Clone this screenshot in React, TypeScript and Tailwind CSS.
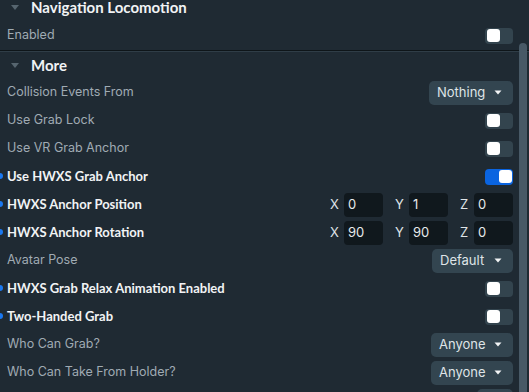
import React from 'react';

type Row =
  | { label: string; bold?: boolean; kind: 'toggle'; on?: boolean }
  | { label: string; bold?: boolean; kind: 'select'; value: string; w: string }
  | { label: string; bold?: boolean; kind: 'vec'; values: [string, string, string] }
  | { label: string; bold?: boolean; kind: 'num'; value: string };

const ROWS: Row[] = [
  { label: 'Collision Events From', kind: 'select', value: 'Nothing', w: 'w-[84px]' },
  { label: 'Use Grab Lock', kind: 'toggle' },
  { label: 'Use VR Grab Anchor', kind: 'toggle' },
  { label: 'Use HWXS Grab Anchor', bold: true, kind: 'toggle', on: true },
  { label: 'HWXS Anchor Position', bold: true, kind: 'vec', values: ['0', '1', '0'] },
  { label: 'HWXS Anchor Rotation', bold: true, kind: 'vec', values: ['90', '90', '0'] },
  { label: 'Avatar Pose', kind: 'select', value: 'Default', w: 'w-[81px]' },
  { label: 'HWXS Grab Relax Animation Enabled', bold: true, kind: 'toggle' },
  { label: 'Two-Handed Grab', bold: true, kind: 'toggle' },
  { label: 'Who Can Grab?', kind: 'select', value: 'Anyone', w: 'w-[82px]' },
  { label: 'Who Can Take From Holder?', kind: 'select', value: 'Anyone', w: 'w-[82px]' },
  { label: 'Grab Distance', kind: 'num', value: '1' },
];

const BOLD = { fontFamily: 'Lato, Inter, sans-serif' };

const Caret = () => (
  <svg width="8" height="5" viewBox="0 0 8 5" className="shrink-0">
    <path d="M0.5 0.5h7L4 4.5z" fill="#f2f4f5" />
  </svg>
);

const Toggle = ({ on }: { on?: boolean }) => (
  <div
    className={`w-[28px] h-[16px] rounded-[4px] p-[1.5px] flex ${on ? 'bg-[#0a64e0] justify-end' : 'bg-[#33444e] justify-start'}`}
  >
    <div className="w-[13px] h-[13px] rounded-[3px] bg-white" />
  </div>
);

const Select = ({ value, w }: { value: string; w: string }) => (
  <div className={`${w} h-[24px] rounded-[5px] bg-[#334550] flex items-center justify-between pl-[8px] pr-[11px] text-[13px] text-[#dfe4e7]`}>
    <span>{value}</span>
    <Caret />
  </div>
);

const Vec = ({ values }: { values: [string, string, string] }) => (
  <div className="flex items-center gap-[12px]">
    {(['X', 'Y', 'Z'] as const).map((axis, i) => (
      <div key={axis} className="flex items-center gap-[5px]">
        <span className="w-[9px] text-[13px] text-[#dfe4e7]">{axis}</span>
        <div className="w-[39px] h-[24px] rounded-[4px] bg-[#10181d] flex items-center pl-[4px] text-[13px] text-[#e6eaec]">
          {values[i]}
        </div>
      </div>
    ))}
  </div>
);

const Header = ({ title, className = '' }: { title: string; className?: string }) => (
  <div className={`shrink-0 flex items-center ${className}`}>
    <svg width="8" height="5" viewBox="0 0 8 5" className="ml-[11px] mr-[12px]">
      <path d="M0 0h8L4 5z" fill="#56656f" />
    </svg>
    <span className="text-[15px] font-bold text-[#f1f3f5]" style={BOLD}>{title}</span>
  </div>
);

export default function App() {
  return (
    <div
      className="w-[529px] h-[392px] overflow-hidden bg-[#1f2a33] flex"
      style={{ fontFamily: 'Inter, "Noto Sans", sans-serif' }}
    >
      <div className="flex-1 flex flex-col">
        <Header title="Navigation Locomotion" className="h-[27px] -mt-[6px]" />
        <div className="shrink-0 h-[29px] flex items-center justify-between pl-[7px] pr-[6px]">
          <span className="text-[12.5px] text-[#a0abb3]">Enabled</span>
          <Toggle />
        </div>
        <div className="shrink-0 h-[2px] border-t border-[#0e1519] bg-[#2f3d47] -mr-[10px]" />
        <Header title="More" className="h-[26px]" />
        {ROWS.map((row) => (
          <div key={row.label} className="relative h-[28px] shrink-0 flex items-center justify-between pl-[7px] pr-[6px] pt-[1px]">
            {row.bold && (
              <div className="absolute -left-[3px] top-1/2 -translate-y-1/2 w-[6px] h-[6px] rounded-full bg-[#1a78f0]" />
            )}
            <span
              className={row.bold ? 'text-[13px] font-bold text-[#f1f3f5]' : 'text-[12.5px] text-[#a0abb3]'}
              style={row.bold ? BOLD : undefined}
            >
              {row.label}
            </span>
            {row.kind === 'toggle' && <Toggle on={row.on} />}
            {row.kind === 'select' && <Select value={row.value} w={row.w} />}
            {row.kind === 'vec' && <Vec values={row.values} />}
            {row.kind === 'num' && (
              <div className="w-[36px] h-[24px] rounded-[5px] bg-[#334550] flex items-center pl-[6px] text-[13px] text-[#dfe4e7]">
                {row.value}
              </div>
            )}
          </div>
        ))}
      </div>
      <div className="w-[10px] shrink-0 pt-[43px] pr-[2px]">
        <div className="w-[8px] h-full rounded-t-[4px] bg-[#485966]" />
      </div>
    </div>
  );
}
